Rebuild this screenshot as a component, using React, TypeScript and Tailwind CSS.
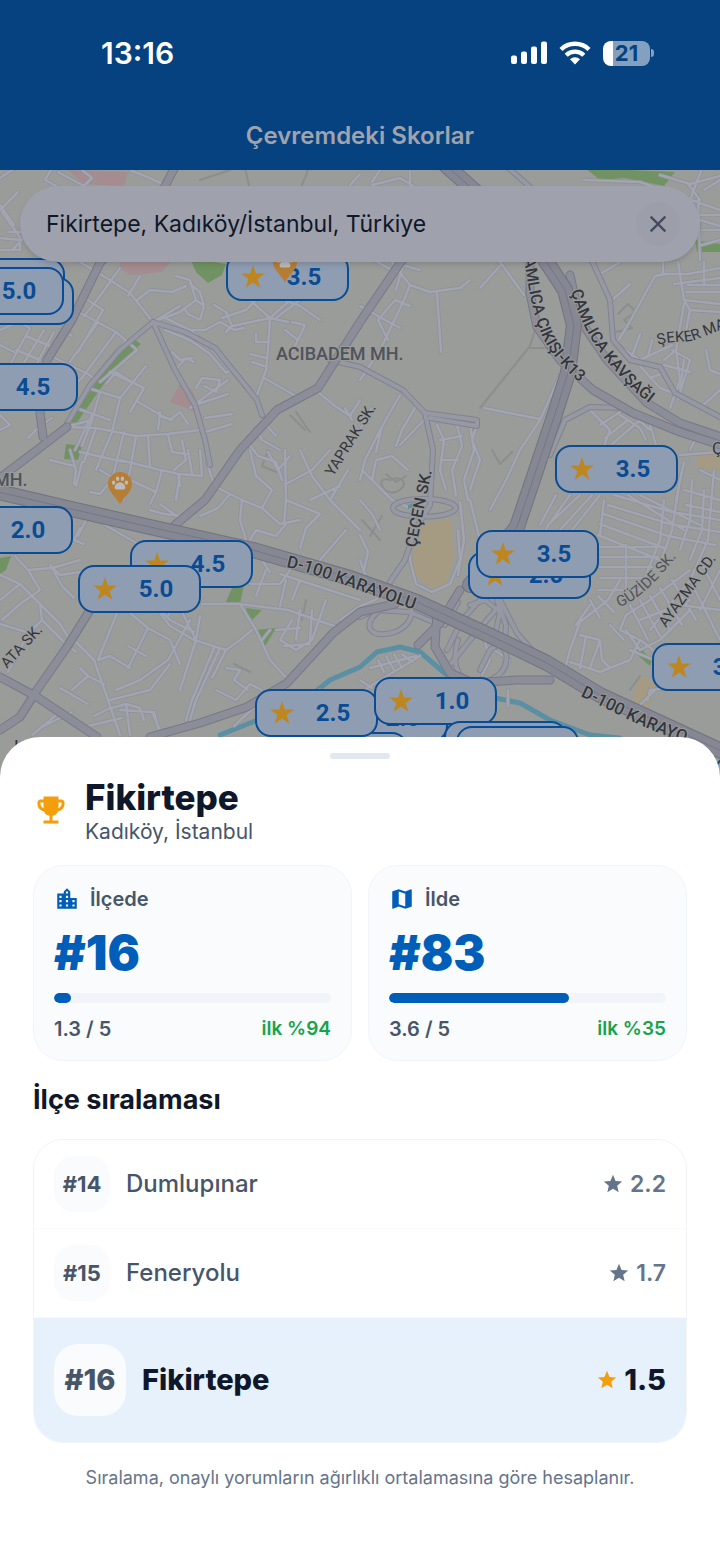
import React, { useState } from 'react';
import { MdClose, MdEmojiEvents, MdLocationCity, MdMap, MdStar } from 'react-icons/md';

type Marker = { left: number; top: number; score?: string };

const markers: Marker[] = [
  { left: -58, top: 88 },
  { left: -49, top: 107 },
  { left: -59, top: 97, score: '5.0' },
  { left: -45, top: 193, score: '4.5' },
  { left: -50, top: 336, score: '2.0' },
  { left: 226, top: 83, score: '3.5' },
  { left: 555, top: 275, score: '3.5' },
  { left: 468, top: 381, score: '2.0' },
  { left: 476, top: 360, score: '3.5' },
  { left: 130, top: 370, score: '4.5' },
  { left: 78, top: 395, score: '5.0' },
  { left: 652, top: 473, score: '3.5' },
  { left: 325, top: 524, score: '2.0' },
  { left: 285, top: 562 },
  { left: 255, top: 519, score: '2.5' },
  { left: 374, top: 507, score: '1.0' },
  { left: 444, top: 551 },
  { left: 456, top: 556 },
  { left: 714, top: 586 },
];

const minorRoads = [
  // north-west
  'M0 178 20 165M45 180 52 168M45 180 60 188M58 172 84 186 92 178 82 170M130 170 150 178 165 185M0 210 18 192M2 212 22 240 12 250M0 238 20 240V250H0M8 232H28M0 205 14 225',
  'M80 262 110 280 130 293 153 322M74 310 90 318 116 332 137 350M120 268 97 300 84 316M140 276 128 296M88 300 103 310 78 352M60 330 72 336M116 332 82 378 66 392M98 322 70 362M137 350 100 382M126 340 104 366M55 358 88 374 96 380',
  'M0 330 18 322 30 328 6 372M44 330 22 366M54 332 32 372M26 336 50 346M16 350 40 360M0 345 14 352M0 430 10 425 0 415M28 438 40 426 52 418',
  'M153 322 180 312 196 300 190 280 176 276M137 300 150 290 172 292 186 286M153 322 180 306M190 284 200 292 204 306 200 320 188 314 184 308M204 306 196 300',
  'M165 318 190 330 208 345 230 370 226 373 210 354 190 340 165 330M214 305 226 312 232 326 226 332M222 318 246 310 256 300M230 290 240 296M232 326 270 318 290 300M185 330 205 330 220 322 234 330 244 328',
  'M270 318 268 350 266 370 257 395M250 300 270 318 288 322M285 330 298 340 305 325 292 322M298 340 292 352M268 342H256V334M250 354 266 358M252 362 264 366M264 378 296 396M300 300 276 318M320 320 300 306 284 300',
  'M318 392 335 406 350 416 360 400M345 408 352 420',
  'M88 388 120 398 146 366M100 392 92 420 82 446M120 398 112 432 96 470M132 382 116 372 106 384M76 408 110 420M110 372 144 388 130 412M138 402 152 410 170 420M92 420 65 427',
  'M67 427 96 428 136 436 168 434 200 430M75 450 92 415M80 452 124 462M96 428 84 462M124 432 112 480 100 494M136 436 130 470 124 500M148 436 150 466M168 434 172 452 186 454M160 412 158 430M170 420 180 412 188 424M172 420 160 416M182 440 186 460 174 470',
  'M175 370 186 358 194 362M172 352 180 360 192 358M195 405 228 394M205 418 232 414M190 408 214 390 228 380M205 432 232 424M196 388 202 378 220 380 216 392 204 386',
  'M262 420 276 436M255 428 262 440 280 450M246 440 258 456 276 462 282 480M268 452 278 470 290 456',
  // west centre
  'M70 450 76 470 74 484M50 460 74 466M82 462 76 486M100 470 110 476 130 480M100 494 90 492M120 460 160 470M130 480 156 492 162 470M156 492 150 504M162 470 178 474 180 486M200 450 202 476 180 474 176 500',
  'M188 450 192 474M207 462 214 486 230 494M230 494 242 500 262 508 280 524 300 520M242 500 240 520 246 540M230 494 218 508 200 516M300 450 312 476 330 500 350 520 360 530M285 450 286 500 284 524M286 484 312 470 330 450M286 500 320 514M262 508 272 490 256 476 250 450',
  'M250 540 256 530 276 536 286 524M310 500 340 486M330 500 348 470M300 548 306 528 320 514M320 560 346 530M160 504 182 520M150 510 164 514 182 516M74 505 110 528 140 545M80 528 74 540 84 544M86 520 78 536',
  'M0 600 20 584 40 604 60 624 70 640M0 575 20 584M15 556 28 570 52 568 80 560M28 570 40 590 20 604M52 568 62 586 74 598M0 624 26 632M40 604 42 620 28 634 8 672M50 565 60 575 80 572M20 604 2 620M42 620 62 640 76 652',
  'M117 613 98 660M74 640 94 660 108 700 120 735M98 660 110 656 130 668M80 668 88 676 72 690M60 688 88 704M88 676 104 684M130 613 148 628 128 668M140 613 150 600 170 626 194 640M148 628 170 640 180 664M128 646 146 656M116 690 140 680 168 660 190 620M110 700 150 690 170 664',
  'M112 708 126 704 130 735M126 704 140 708 144 720M120 710 152 712 162 735M154 712 160 735M94 716 110 708M88 726 122 718M40 728 72 712M32 735 60 712',
  'M150 600 170 620 194 632M176 600 196 640 180 690M168 616 178 600M194 640 226 650 212 678M220 648 196 700 190 720M214 648 192 700 186 720M226 650 240 640 252 630M226 668 240 670 234 680 248 690M216 690 236 700M236 700 250 684 262 690M196 640 200 616',
  'M202 604 240 604 288 610 340 628M240 604 256 630 270 660 290 682M256 596 266 570M280 606 286 580M250 584H280L290 570M280 574 360 600M262 560 270 572M292 600 300 580M326 600 312 640 296 650 280 640 292 620M300 610 296 640M312 610 310 640M276 630 300 628M284 646 310 644M270 630 262 640',
  'M234 726 262 700M262 700 280 698M290 700 320 690',
  // centre, between the district boundary and the motorway
  'M366 230 410 285 430 292 460 288 470 280M395 272 360 252M410 285 404 300 380 350 360 380M395 300 410 306M360 306 400 328M395 300 378 320 388 340M480 288 500 266M437 293 441 352M500 262 524 295M392 262 420 270M404 262 396 290',
  'M400 395 380 430 365 460 360 480M416 406 402 430 396 446M424 420 400 445M372 408 360 430M382 426 376 452M484 408 540 419M560 375 540 420 520 450 506 480 490 510',
  'M437 425 444 440 440 470 446 490M470 425 474 450 464 480 468 500M456 420 462 446 452 470 456 496M440 440 462 436M442 460H458M478 422 472 440 480 460 470 490',
  'M360 535 368 552 364 570M360 500 372 514 380 530M362 470 372 480 392 500 414 510M372 480 376 460 392 456 408 470M470 500 480 540 484 570M460 502 464 540 458 575',
  'M411 530 410 560 416 584 432 592 450 584 460 560 458 530',
  // north-east
  'M372 185 400 178 420 190M350 185 360 174M410 170V186M372 182 380 170M600 200 592 190M584 180 640 182 720 210M690 200 702 168M690 200 700 220 720 226M704 190 720 180M700 215H720M702 230H720M702 245 720 240M698 200 700 260M660 175 690 184 720 176M688 184 700 200',
  'M663 262V274L655 276 628 325 616 344M663 274H688L720 268M678 262 684 300 690 310M688 285H720M686 292H720M704 262V284M674 284 720 278M684 300 720 304M655 276 668 274M610 302 630 284M600 274 620 262M690 310 720 312M684 304 676 350 664 360M676 350 680 380 670 408M690 310 684 340',
  'M616 344 640 360 672 345M640 334 630 362M648 356 652 340M684 360 680 390M672 350 690 360 678 400M706 350 710 370 720 374M700 408 720 390M640 366 660 388 676 394M650 378 666 372M664 365 690 372',
  // east grid
  'M590 410 610 430 604 446M600 425 620 412M620 415 640 428 646 440M630 412 650 430M605 438 628 420M612 444 640 420M650 425 656 445M690 450 700 430M680 455 720 452',
  'M600 495 572 530M592 495 560 530M580 495 548 525 546 530M570 495 552 520M556 495 540 525M604 500 600 535M614 495 672 512 720 520M608 505 670 524 720 532M604 514 668 536 715 545M600 524 664 548M598 535 660 560M628 495 684 530M640 495 700 525M598 547H662M600 557H658M600 567H652M600 578H645M598 590H640M626 545V600',
  'M680 480 672 530 658 570M692 480 690 520 680 550M704 490 702 530 690 560M664 500 660 540 640 590M684 462 676 500M700 470 720 480M684 490 720 500M686 505 720 512M714 470 708 540 690 580 650 630',
  'M590 600 600 618M598 596 614 612M620 580 608 600 580 622 570 650 566 665M580 635 600 640 590 668M586 636 580 668M600 640 602 660 610 668M570 662 600 672 630 660 640 640 620 630 626 615 650 600 690 570M610 625 624 640M630 605 648 640M640 600 660 636M650 596 670 630M660 588 682 625M672 580 696 620M640 620 690 600M626 630 640 650 660 640 690 610M690 580 720 640M700 560 720 600M680 605 720 610M576 625 590 605M700 610 720 570',
  'M630 650 654 660M655 690 640 705M640 640 660 655M648 700 650 690 670 688',
  // interchange surroundings
  'M360 580 372 590M340 620 360 606M395 585 375 600 360 606M367 580 360 560M484 638 490 660 482 675M494 650 510 660 500 680M378 660 384 672M386 656 394 670M394 654 402 668M402 654 412 662M370 668 416 656M364 690 420 656M360 680 372 688M508 690V706',
];

const localRoads = [
  'M330 360 360 367 403 390 425 413 433 450 430 505 415 530 405 560 390 582',
  'M153 322 120 350 90 385 65 427',
  'M153 322 175 370 195 405 205 440 210 465',
  'M153 322 185 332 215 348 245 385 257 400 262 415',
  'M425 413 477 420V426L430 418',
  'M505 165 545 200 593 263 610 300 613 340 630 360 660 367 675 393 720 417',
  'M550 455 565 420 590 407 625 408',
  'M393 508C393 496 454 496 456 508 454 519 394 520 393 508Z',
  'M500 600 517 633 545 665',
  'M380 610C360 625 370 640 395 632 410 626 416 612 408 604',
  'M497 600 506 625 505 640 490 650 480 670M470 605 485 600 500 612 494 640',
  'M447 650 462 620 480 600M450 665 470 640 500 605M458 602 445 625',
  'M458 640C450 670 460 688 490 680 510 672 510 650 500 645',
  'M360 617 375 610 410 612 440 625',
];

const mainRoads = [
  'M176 165 163 190 100 263 72 320 47 360 40 413 43 437',
  'M67 427 37 450 0 478',
  'M420 240 400 263 360 322 318 388 277 410 240 450 205 500 175 525',
  'M0 677 37 697 67 717 97 737',
  'M90 610 67 647 37 690 20 717 0 730',
  'M395 604 360 612 333 633 287 683 247 707 200 723 150 737',
  'M437 612 435 647 450 673 473 683 517 680 550 680',
  'M460 590 440 623 418 645',
  'M530 255 530 293 537 327 560 360 593 390 633 413 680 432 730 448',
  'M570 275 580 320 607 360 647 403 680 423 730 440',
];

const motorways = [
  'M440 160 485 200 540 252 565 290 574 325 568 373 553 420 517 527 470 585',
  'M-10 490 67 508 150 527 253 550 350 578 417 602 493 637 547 663 600 695 730 755',
];

const parks = [
  'M66 444 82 446 78 460 64 459Z',
  'M190 258 226 264 222 275 208 283 196 272Z',
  'M585 168 675 172 664 186 625 178 600 180Z',
  'M695 240 720 244V252H697Z',
  'M0 558 11 556 6 570 0 574Z',
  'M232 588 244 585 240 604 226 602Z',
  'M246 608 262 610 250 622Z',
  'M256 630 276 628 264 648 260 640Z',
  'M632 650 640 648 652 660 650 666Z',
  'M135 340 118 355 92 388 70 422 76 424 98 392 120 362 141 344Z',
];

const blush = [
  'M68 170 128 172 124 186 84 184Z',
  'M120 262 170 262 162 272 130 275 120 268Z',
  'M180 384 192 390 202 416 186 408 170 402Z',
];

const sand = [
  'M420 522 452 519 453 560 446 586 430 587 414 574 412 540Z',
  'M698 456 720 455V470L698 468Z',
  'M640 676 656 684 648 708 632 700Z',
];

const ghostRoads =
  'M200 180 230 170M250 190 245 168M300 190 308 170M535 300V330L530 346 480 408M530 348H560M390 480C376 474 380 496 396 492 410 486 404 474 390 480ZM386 474 396 482 406 476M618 314 628 304 636 312 624 320 632 328 616 332M290 415 305 430M296 412 310 432M492 450 500 464 512 452M250 300C270 284 284 296 290 290M362 520 380 540M370 536 382 516M630 690 640 676M268 450 262 466 276 472M306 600 302 620M234 664 250 672';

function StarShape() {
  return (
    <svg viewBox="0 0 24 24" className="size-6 shrink-0 fill-[#bd861e]" aria-hidden="true">
      <path d="M12 0 14.8 8.6H24L16.6 14 19.4 22.8 12 17.4 4.6 22.8 7.4 14 0 8.6H9.2Z" />
    </svg>
  );
}

function PawPin({ className }: { className: string }) {
  return (
    <svg viewBox="0 0 24 32" className={`absolute h-8 w-6 ${className}`} aria-hidden="true">
      <path d="M12 0a12 12 0 0 1 12 12c0 7-7 12-12 20C7 24 0 19 0 12A12 12 0 0 1 12 0Z" fill="#b67d35" />
      <g fill="#b9bbbf">
        <ellipse cx="5.6" cy="10.6" rx="1.7" ry="2.2" />
        <ellipse cx="9.6" cy="6.8" rx="1.7" ry="2.3" />
        <ellipse cx="14.4" cy="6.8" rx="1.7" ry="2.3" />
        <ellipse cx="18.4" cy="10.6" rx="1.7" ry="2.2" />
        <path d="M12 10.2c2.6 0 5.4 3 5.4 5.2 0 2.600-2.800 2-5.400 2s-5.400.6-5.400-2c0-2.200 2.800-5.200 5.400-5.200Z" />
      </g>
    </svg>
  );
}

function CityMap() {
  return (
    <svg
      viewBox="0 170 720 620"
      preserveAspectRatio="xMidYMin slice"
      className="absolute inset-0 size-full bg-[#9a9c99]"
      role="img"
      aria-label="Kadıköy haritası"
    >
      <g fill="#719363">{parks.map((d) => <path key={d} d={d} />)}</g>
      <g fill="#a48c90">{blush.map((d) => <path key={d} d={d} />)}</g>
      <g fill="#a59b82">{sand.map((d) => <path key={d} d={d} />)}</g>

      <g fill="none" strokeLinecap="round" strokeLinejoin="round">
        <path d={ghostRoads} stroke="#8c8e8e" strokeWidth="2" />
        <path
          d="M220 735 270 715 315 692 330 680 360 667 377 652 400 647 420 652 447 675M490 697 520 703 550 720 590 735 620 738"
          stroke="#5b8fa3"
          strokeWidth="5"
        />
        {minorRoads.map((d) => <path key={d} d={d} stroke="#8e909a" strokeWidth="4" />)}
        {minorRoads.map((d) => <path key={d} d={d} stroke="#a2a4af" strokeWidth="2.500" />)}
        {localRoads.map((d) => <path key={d} d={d} stroke="#81838e" strokeWidth="6" />)}
        {localRoads.map((d) => <path key={d} d={d} stroke="#9698a4" strokeWidth="4" />)}
        {mainRoads.map((d) => <path key={d} d={d} stroke="#777985" strokeWidth="9" />)}
        {mainRoads.map((d) => <path key={d} d={d} stroke="#8b8d99" strokeWidth="7" />)}
        {motorways.map((d) => <path key={d} d={d} stroke="#71737f" strokeWidth="16" />)}
        {motorways.map((d) => <path key={d} d={d} stroke="#858793" strokeWidth="14" />)}
        {motorways.map((d) => <path key={d} d={d} stroke="#757783" strokeWidth="1" />)}
      </g>
      <path d="M408 505 416 502 414 507 408 509Z" fill="#5b8fa3" />

      <defs>
        <path id="k13" d="M524 258C530 300 536 335 556 358 568 374 580 384 610 402" />
        <path id="kavsak" d="M571 291C582 330 600 355 620 376 632 390 644 400 662 412" />
        <path id="seker" d="M658 345C672 340 688 344 700 338L730 326" />
        <path id="d100w" d="M286 567C320 574 360 592 430 615" />
        <path id="d100e" d="M580 696C615 712 640 728 700 748" />
        <path id="cecen" d="M416 548 432 470 440 440" />
        <path id="guzide" d="M619 607C640 600 658 580 690 540" />
        <path id="ayazma" d="M666 628 724 548" />
      </defs>
      <g
        fontFamily="Roboto, sans-serif"
        fontSize="15"
        fill="#33363f"
        stroke="#9a9c99"
        strokeWidth="2"
        paintOrder="stroke"
      >
        <text x="276" y="360" fontSize="18" fontWeight="500" fill="#50535b">ACIBADEM MH.</text>
        <text x="-6" y="486" fontSize="18" fontWeight="500" fill="#50535b">MH.</text>
        <text transform="translate(333 477) rotate(-58)">YAPRAK SK.</text>
        <text transform="translate(7 669) rotate(-47)">ATA SK.</text>
        <text x="712" y="454" fontSize="17">Ç</text>
        <text x="14" y="753" fontSize="18">H</text>
        <text fontSize="16" fontWeight="500"><textPath href="#k13">AMLICA ÇIKIŞI-K13</textPath></text>
        <text fontSize="16" fontWeight="500"><textPath href="#kavsak">ÇAMLICA KAVŞAĞI</textPath></text>
        <text><textPath href="#seker">ŞEKER MA</textPath></text>
        <text fontSize="17" fontWeight="500"><textPath href="#d100w">D-100 KARAYOLU</textPath></text>
        <text fontSize="17" fontWeight="500"><textPath href="#d100e">D-100 KARAYO</textPath></text>
        <text fontSize="16" fontWeight="500"><textPath href="#cecen">ÇEÇEN SK.</textPath></text>
        <text fill="#50535b"><textPath href="#guzide">GÜZİDE SK.</textPath></text>
        <text><textPath href="#ayazma">AYAZMA CD.</textPath></text>
      </g>
    </svg>
  );
}

function StatusBar() {
  return (
    <div className="flex h-[106px] items-center justify-between pr-[66px] pl-[101px] text-white">
      <span className="text-[30px] font-semibold">13:16</span>
      <div className="flex items-center gap-3">
        <svg viewBox="0 0 36 24" className="h-6 w-9" fill="#fff" aria-hidden="true">
          <rect x="0" y="14.500" width="6" height="8.500" rx="2" />
          <rect x="10" y="10.500" width="6" height="12.500" rx="2" />
          <rect x="20" y="5.500" width="6" height="17.500" rx="2" />
          <rect x="30" y="0.500" width="6" height="22.500" rx="2" />
        </svg>
        <svg viewBox="0 0 32 24" className="h-6 w-8" aria-hidden="true">
          <g fill="none" stroke="#fff" strokeWidth="4.400">
            <path d="M2 8.500a20 20 0 0 1 28 0" />
            <path d="M7.200 14.200a12.600 12.600 0 0 1 17.600 0" />
          </g>
          <path d="M11 18.200a7.200 7.200 0 0 1 10 0L16 23.400Z" fill="#fff" />
        </svg>
        <div className="flex items-center">
          <div className="flex h-[25px] w-[47px] items-center justify-center overflow-hidden rounded-lg bg-linear-to-r from-white from-22% to-[#83a0bf] to-22% text-[22px] font-bold text-[#06427f]">
            21
          </div>
          <div className="ml-px h-2 w-[3px] rounded-r-full bg-[#83a0bf]" />
        </div>
      </div>
    </div>
  );
}

function RankCard({ icon, label, rank, score, top, progress }: {
  icon: React.ReactNode;
  label: string;
  rank: number;
  score: number;
  top: number;
  progress: number;
}) {
  return (
    <div className="flex flex-1 flex-col rounded-[30px] border border-[#f1f5f9] bg-[#f9fbfd] px-5 pt-[19px] pb-[17px]">
      <div className="flex h-7 items-center gap-[10px] text-xl font-semibold text-[#475569]">
        {icon}
        {label}
      </div>
      <p className="mt-3 text-[48px] leading-14 font-black text-[#005eb8]">#{rank}</p>
      <div className="mt-3 h-[10px] overflow-hidden rounded-full bg-[#f1f5f9]">
        <div className="h-full rounded-full bg-[#005eb8]" style={{ width: `${progress}%` }} />
      </div>
      <div className="mt-3 flex items-center justify-between leading-7 font-semibold">
        <span className="text-xl text-[#475569]">{score.toFixed(1)} / 5</span>
        <span className="text-[19px] text-[#16a34a]">ilk %{top}</span>
      </div>
    </div>
  );
}

const neighbours = [
  { rank: 14, name: 'Dumlupınar', score: '2.2' },
  { rank: 15, name: 'Feneryolu', score: '1.7' },
];

export default function App() {
  const [query, setQuery] = useState('Fikirtepe, Kadıköy/İstanbul, Türkiye');

  return (
    <div className="flex min-h-screen flex-col bg-white font-[Inter,sans-serif]">
      <header className="bg-[#06427f]">
        <StatusBar />
        <h1 className="pt-[13px] pb-[17px] text-center text-2xl leading-[34px] font-semibold text-[#a0a3ad]">
          Çevremdeki Skorlar
        </h1>
      </header>

      <div className="relative h-[620px] overflow-hidden px-5 pt-4">
        <CityMap />
        {markers.map((m) => (
          <button
            key={`${m.left}-${m.top}`}
            type="button"
            aria-label={m.score ? undefined : 'Skor'}
            className="absolute flex h-12 w-[123px] items-center gap-[15px] rounded-2xl border-2 border-[#094c94] bg-[#8f9db3] pl-[13px] font-[Roboto,sans-serif] text-2xl font-bold text-[#094c94]"
            style={{ left: m.left, top: m.top }}
          >
            {m.score && (
              <>
                <StarShape />
                <span className="w-12 text-center">{m.score}</span>
              </>
            )}
          </button>
        ))}
        <PawPin className="top-[302px] left-[108px]" />
        <PawPin className="top-[80px] left-[273px]" />

        <div className="relative flex h-[76px] items-center rounded-full bg-[#9fa2ac] pr-5 pl-[26px] shadow-md">
          <input
            type="text"
            aria-label="Konum ara"
            value={query}
            onChange={(e) => setQuery(e.target.value)}
            className="min-w-0 flex-1 text-[23px] text-[#0f172a] outline-none"
          />
          <button
            type="button"
            aria-label="Temizle"
            onClick={() => setQuery('')}
            className="flex size-11 items-center justify-center rounded-full bg-[#9c9faa] text-[#434b60]"
          >
            <MdClose size={28} />
          </button>
        </div>
      </div>

      <section className="relative -mt-[53px] flex-1 rounded-t-[40px] bg-white px-[33px] pt-4 pb-10">
        <div className="mx-auto h-[6px] w-[60px] rounded-full bg-[#e2e8f0]" />

        <div className="mt-4 flex items-center gap-4">
          <MdEmojiEvents size={36} className="text-[#f59e0b]" />
          <div>
            <h2 className="text-[35px] leading-[44px] font-extrabold text-[#0f172a]">Fikirtepe</h2>
            <p className="text-[21px] leading-[26px] text-[#475569]">Kadıköy, İstanbul</p>
          </div>
        </div>

        <div className="mt-5 flex gap-4">
          <RankCard
            icon={<MdLocationCity size={26} className="text-[#005eb8]" />}
            label="İlçede"
            rank={16}
            score={1.3}
            top={94}
            progress={6}
          />
          <RankCard
            icon={<MdMap size={26} className="text-[#005eb8]" />}
            label="İlde"
            rank={83}
            score={3.6}
            top={35}
            progress={65}
          />
        </div>

        <h3 className="mt-[23px] text-[27px] leading-8 font-bold text-[#0f172a]">İlçe sıralaması</h3>

        <ul className="mt-[23px] overflow-hidden rounded-[30px] border border-[#f1f5f9]">
          {neighbours.map((n) => (
            <li key={n.rank} className="flex items-center gap-4 border-b border-[#f8fafc] px-5 py-4">
              <span className="flex size-14 items-center justify-center rounded-[20px] bg-[#f9fbfd] text-[22px] font-bold text-[#475569]">
                #{n.rank}
              </span>
              <span className="flex-1 text-2xl font-medium text-[#475569]">{n.name}</span>
              <span className="flex items-center gap-[6px] text-[23px] font-semibold text-[#64748b]">
                <MdStar size={22} />
                {n.score}
              </span>
            </li>
          ))}
          <li className="flex items-center gap-4 bg-[#e6f1fb] px-5 py-[26px]">
            <span className="flex size-[72px] items-center justify-center rounded-3xl bg-[#f9fbfd] text-[29px] font-extrabold text-[#475569]">
              #16
            </span>
            <span className="flex-1 text-[29px] font-extrabold text-[#0f172a]">Fikirtepe</span>
            <span className="flex items-center gap-[6px] text-[29px] font-extrabold text-[#0f172a]">
              <MdStar size={22} className="text-[#f59e0b]" />
              1.5
            </span>
          </li>
        </ul>

        <p className="mt-[21px] text-center text-lg text-[#64748b]">
          Sıralama, onaylı yorumların ağırlıklı ortalamasına göre hesaplanır.
        </p>
      </section>
    </div>
  );
}
